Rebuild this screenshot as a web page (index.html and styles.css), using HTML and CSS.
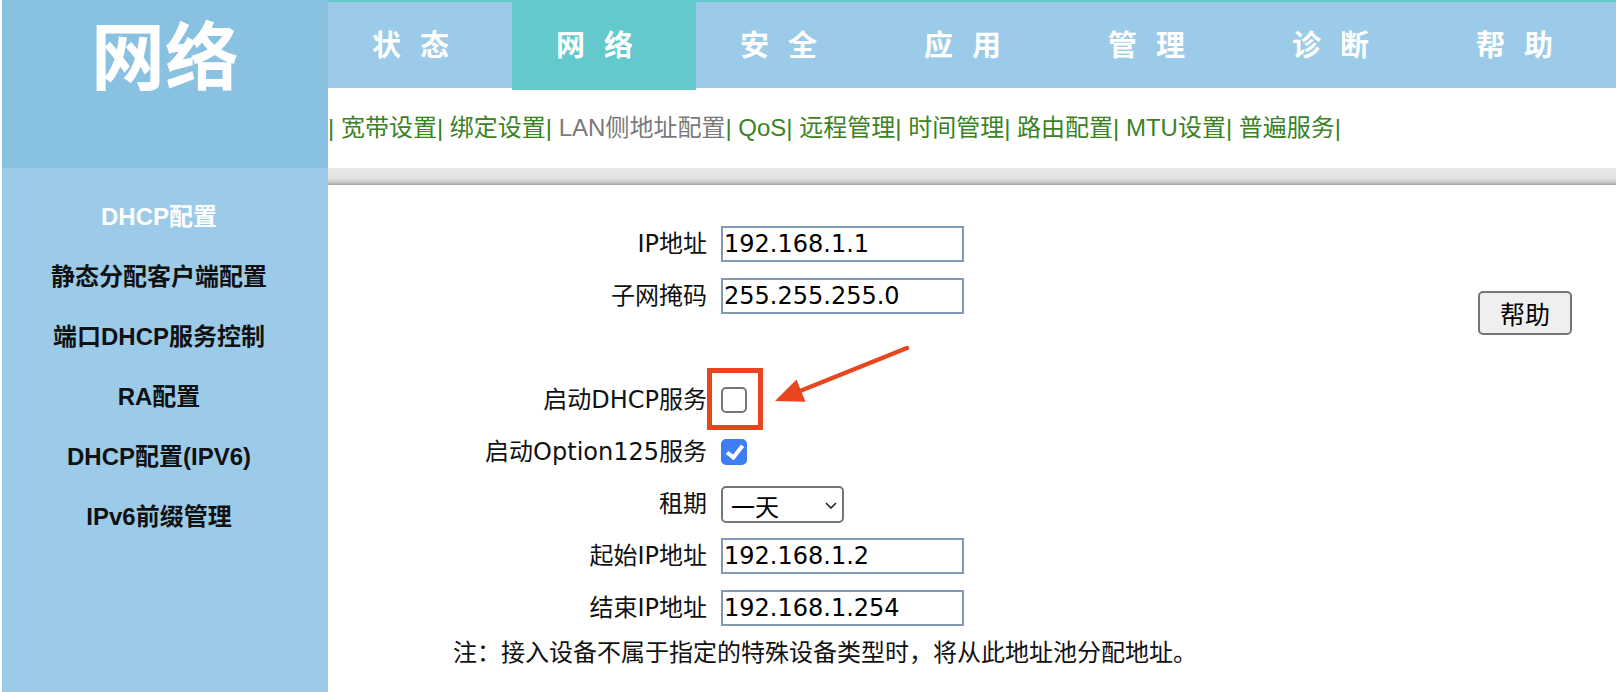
FILE: index.html
```html
<!DOCTYPE html>
<html lang="zh-CN">
<head>
<meta charset="utf-8">
<title>网络 - DHCP配置</title>
<link rel="stylesheet" href="styles.css">
</head>
<body>
<div class="layout">
  <aside class="side">
    <div class="brand">网络</div>
    <ul class="sidemenu">
      <li class="active">DHCP配置</li>
      <li>静态分配客户端配置</li>
      <li>端口DHCP服务控制</li>
      <li>RA配置</li>
      <li>DHCP配置(IPV6)</li>
      <li>IPv6前缀管理</li>
    </ul>
  </aside>
  <main class="main">
    <nav class="tabs">
      <a class="tab">状态</a>
      <a class="tab active">网络</a>
      <a class="tab">安全</a>
      <a class="tab">应用</a>
      <a class="tab">管理</a>
      <a class="tab">诊断</a>
      <a class="tab">帮助</a>
    </nav>
    <div class="subnav">|&#32;<a>宽带设置</a>|&#32;<a>绑定设置</a>|&#32;<a class="cur">LAN侧地址配置</a>|&#32;<a>QoS</a>|&#32;<a>远程管理</a>|&#32;<a>时间管理</a>|&#32;<a>路由配置</a>|&#32;<a>MTU设置</a>|&#32;<a>普遍服务</a>|</div>
    <div class="bar"></div>
    <div class="content">
      <form class="form">
        <label class="label">IP地址</label>
        <input class="field" type="text" value="192.168.1.1">
        <label class="label">子网掩码</label>
        <input class="field" type="text" value="255.255.255.0">
        <div class="spacer"></div>
        <label class="label">启动DHCP服务</label>
        <div class="mark">
          <input class="cb" type="checkbox">
          <svg class="arrow" viewBox="0 0 145 70" width="145" height="70">
            <line x1="137" y1="8" x2="30" y2="51" stroke="#e8461e" stroke-width="4.5" stroke-linecap="round"/>
            <polygon points="5,61 26.5,39.5 35.5,61.7" fill="#e8461e"/>
          </svg>
        </div>
        <label class="label">启动Option125服务</label>
        <div class="cbcell"><input class="cb" type="checkbox" checked></div>
        <label class="label">租期</label>
        <div class="select">
          <select class="sel"><option>一天</option></select>
          <svg class="chev" viewBox="0 0 12 7" width="12" height="7"><path d="M1 1 L6 6 L11 1" fill="none" stroke="#222" stroke-width="1.6"/></svg>
        </div>
        <label class="label">起始IP地址</label>
        <input class="field" type="text" value="192.168.1.2">
        <label class="label">结束IP地址</label>
        <input class="field" type="text" value="192.168.1.254">
        <div class="note">注：接入设备不属于指定的特殊设备类型时，将从此地址池分配地址。</div>
      </form>
      <div class="help"><button class="helpbtn" type="button">帮助</button></div>
    </div>
  </main>
</div>
</body>
</html>
```
FILE: styles.css
```css
html, body {
  margin: 0;
  padding: 0;
}
body {
  width: 1616px;
  height: 692px;
  overflow: hidden;
  background: #fff;
  font-family: "Liberation Sans", "Noto Sans CJK SC", sans-serif;
}
.layout {
  display: flex;
  height: 692px;
  padding-left: 2px;
  box-sizing: border-box;
}
.side {
  width: 326px;
  flex: none;
  background: #9bcbe8;
  display: flex;
  flex-direction: column;
}
.brand {
  height: 168px;
  background: #89c1e1;
  color: #fff;
  font: 700 74px/104px "Noto Sans CJK SC", sans-serif;
  text-align: center;
}
.sidemenu {
  list-style: none;
  margin: 0;
  padding: 19px 12px 0 0;
}
.sidemenu li {
  height: 60px;
  line-height: 60px;
  text-align: center;
  font-size: 24px;
  font-weight: 700;
  color: #111;
  white-space: nowrap;
}
.sidemenu li.active {
  color: #fff;
}
.main {
  flex: 1;
  min-width: 0;
  display: flex;
  flex-direction: column;
}
.tabs {
  display: grid;
  grid-template-columns: repeat(7, 184px);
  border-top: 2px solid #63c9cc;
  height: 86px;
  background: #9bcbe8;
}
.tab {
  text-align: center;
  color: #fff;
  font: 700 29px/88px "Liberation Sans", "Noto Sans CJK SC", sans-serif;
  letter-spacing: 19px;
  white-space: nowrap;
}
.tab.active {
  background: #63c9cc;
}
.subnav {
  height: 80px;
  line-height: 80px;
  font-size: 24px;
  color: #3a8224;
  white-space: nowrap;
}
.subnav a {
  color: #3a8224;
  text-decoration: none;
}
.subnav a.cur {
  color: #7a7a7a;
}
.bar {
  height: 17px;
  background: linear-gradient(#e9e9e9, #e1e1e1 60%, #cfcfcf 80%, #a6a6a6);
}
.content {
  flex: 1;
  display: flex;
  align-items: flex-start;
}
.form {
  margin: 33px 0 0 125px;
  display: grid;
  grid-template-columns: 254px auto;
  grid-template-rows: repeat(8, 52px) 38px;
  column-gap: 14px;
  align-items: center;
  justify-items: start;
  font: 24px/30px "DejaVu Sans", "Noto Sans CJK SC", sans-serif;
  color: #111;
}
.label {
  justify-self: end;
  white-space: nowrap;
}
.spacer {
  grid-column: 1 / -1;
}
.field {
  width: 243px;
  height: 36px;
  box-sizing: border-box;
  margin: 0;
  border: 2px solid #8398b4;
  border-radius: 0;
  padding: 0 1px;
  font: 24px "DejaVu Sans", "Noto Sans CJK SC", sans-serif;
  color: #000;
  background: #fff;
  outline: none;
}
.cbcell {
  width: 26px;
  height: 26px;
}
.cb {
  -webkit-appearance: none;
  appearance: none;
  display: block;
  position: relative;
  width: 26px;
  height: 26px;
  margin: 0;
  box-sizing: border-box;
  border: 2px solid #767676;
  border-radius: 5px;
  background: #fff;
}
.cb:checked {
  background: #3f7df4;
  border-color: #3f7df4;
}
.cb:checked::after {
  content: "";
  position: absolute;
  left: 7px;
  top: 1px;
  width: 6px;
  height: 13px;
  border: solid #fff;
  border-width: 0 4.5px 4.5px 0;
  transform: rotate(38deg);
}
.mark {
  position: relative;
  width: 26px;
  height: 26px;
}
.mark::before {
  content: "";
  position: absolute;
  left: -14px;
  top: -19px;
  width: 56px;
  height: 62px;
  box-sizing: border-box;
  border: 5px solid #e8461e;
}
.arrow {
  position: absolute;
  left: 49px;
  top: -47px;
  overflow: visible;
}
.select {
  position: relative;
  width: 123px;
  height: 37px;
}
.sel {
  -webkit-appearance: none;
  appearance: none;
  width: 100%;
  height: 100%;
  margin: 0;
  box-sizing: border-box;
  border: 2px solid #767676;
  border-radius: 5px;
  background: #fff;
  padding: 0 0 0 8px;
  font: 24px "Noto Sans CJK SC", sans-serif;
  color: #000;
  outline: none;
}
.chev {
  position: absolute;
  right: 7px;
  top: 16px;
  pointer-events: none;
}
.note {
  grid-column: 1 / -1;
  justify-self: start;
  white-space: nowrap;
  line-height: 38px;
}
.help {
  margin: 106px 44px 0 auto;
}
.helpbtn {
  width: 94px;
  height: 44px;
  box-sizing: border-box;
  margin: 0;
  padding: 0;
  border: 2px solid #767676;
  border-radius: 5px;
  background: #efefef;
  font: 25px "Noto Sans CJK SC", sans-serif;
  color: #000;
}
```
